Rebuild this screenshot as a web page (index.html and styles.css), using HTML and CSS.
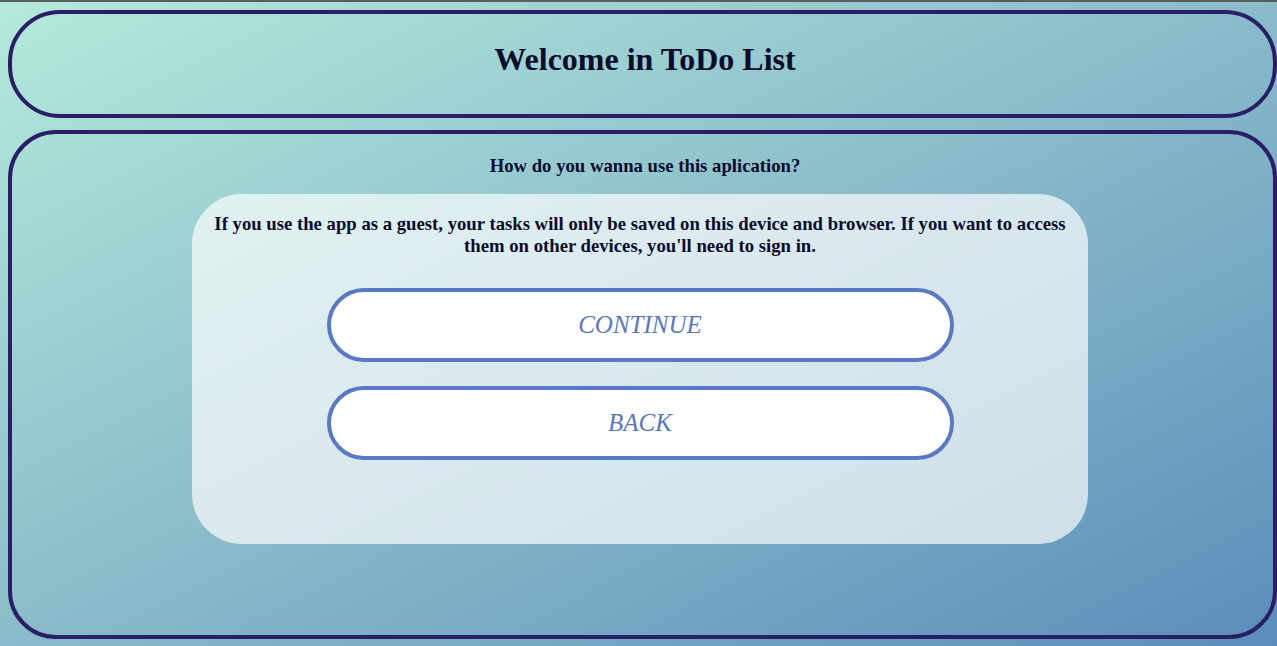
FILE: index.html
```html
<!DOCTYPE html>
<html lang="en">
<head>
<meta charset="utf-8">
<title>ToDo List</title>
<link rel="stylesheet" href="styles.css">
</head>
<body>
  <header class="top">
    <h1 class="title">Welcome in ToDo List</h1>
  </header>
  <main class="panel">
    <h3 class="question">How do you wanna use this aplication?</h3>
    <section class="card">
      <p class="info">If you use the app as a guest, your tasks will only be saved on this device and browser. If you want to access them on other devices, you'll need to sign in.</p>
      <div class="actions">
        <button class="btn">CONTINUE</button>
        <button class="btn">BACK</button>
      </div>
    </section>
  </main>
</body>
</html>
```

FILE: styles.css
```css
html {
  height: 100%;
}
body {
  margin: 0;
  padding: 8px 0 0 8px;
  min-height: 100%;
  box-sizing: border-box;
  border-top: 2px solid #5c5c5c;
  background: linear-gradient(to bottom right, #b4eadb 0%, #8ec0cc 45%, #5a8eb9 100%);
  font-family: "Liberation Serif", "Times New Roman", serif;
  color: #0b0b2b;
  overflow: hidden;
}
.top {
  width: 1261px;
  height: 100px;
  border: 4px solid #2a1f66;
  border-radius: 52px;
  display: flex;
  align-items: center;
  justify-content: center;
}
.title {
  margin: 0 0 10px 5px;
  font-size: 32px;
  font-weight: bold;
}
.panel {
  width: 1261px;
  height: 501px;
  margin-top: 12px;
  border: 4px solid #2a1f66;
  border-radius: 48px;
  display: flex;
  flex-direction: column;
  align-items: center;
}
.question {
  margin: 21px 0 17px 5px;
  font-size: 18.72px;
  font-weight: bold;
}
.card {
  width: 896px;
  height: 350px;
  box-sizing: border-box;
  margin-right: 5px;
  padding: 0 16px;
  border-radius: 50px;
  background: rgba(255, 255, 255, 0.68);
  display: flex;
  flex-direction: column;
  align-items: center;
}
.info {
  margin: 19px 0 0;
  font-size: 18.72px;
  line-height: 22px;
  font-weight: bold;
  text-align: center;
}
.actions {
  width: 627px;
  margin-top: 31px;
  display: flex;
  flex-direction: column;
  gap: 24px;
}
.btn {
  width: 100%;
  height: 74px;
  border: 4px solid #5a79c4;
  border-radius: 37px;
  background: #ffffff;
  font-family: "Liberation Serif", "Times New Roman", serif;
  font-style: italic;
  font-size: 25px;
  color: #5a76c1;
  cursor: pointer;
}
```
